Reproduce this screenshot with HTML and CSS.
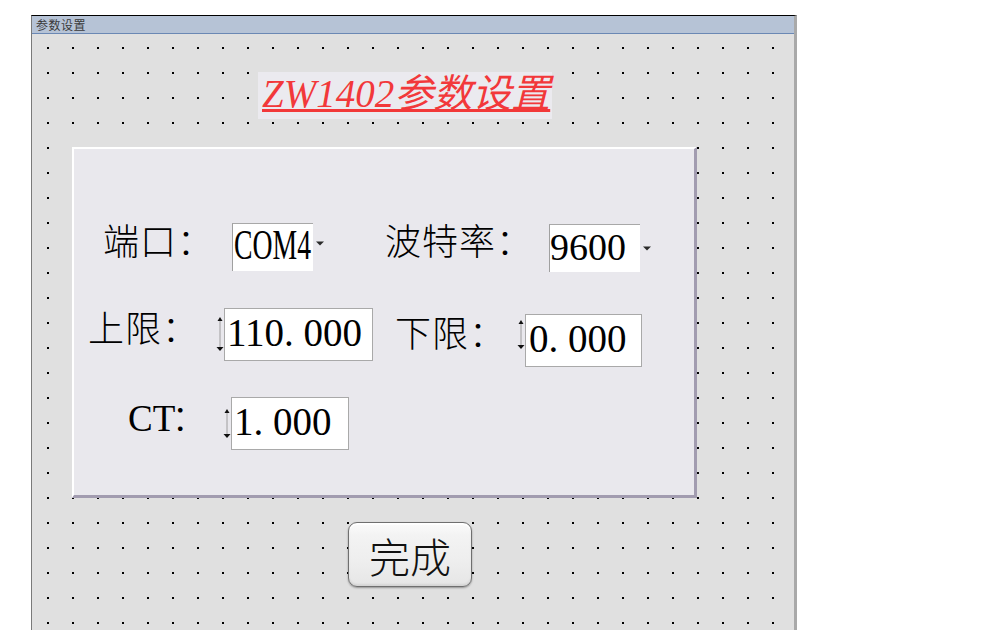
FILE: index.html
```html
<!DOCTYPE html>
<html lang="zh-CN">
<head>
<meta charset="utf-8">
<title>参数设置</title>
<link rel="stylesheet" href="styles.css">
</head>
<body>
<div class="window">
  <div class="titlebar">参数设置</div>
  <div class="canvas">
    <div class="heading"><span class="heading-text">ZW1402参数设置</span></div>
    <div class="panel">
      <div class="row row1">
        <div class="lab lab-port">端口：</div>
        <div class="combo combo-port"><span class="narrow">COM4</span></div>
        <svg class="drop drop-port" width="8" height="5" viewBox="0 0 8 5"><polygon points="0,0.5 8,0.5 4,4.5" fill="#2a2a2a"/></svg>
        <div class="lab lab-baud">波特率：</div>
        <div class="combo combo-baud">9600</div>
        <svg class="drop drop-baud" width="8" height="5" viewBox="0 0 8 5"><polygon points="0,0.5 8,0.5 4,4.5" fill="#2a2a2a"/></svg>
      </div>
      <div class="row row2">
        <div class="lab lab-upper">上限：</div>
        <svg class="spin spin-upper" width="8" height="36" viewBox="0 0 8 36"><polygon points="1.5,5 4,1 6.5,5" fill="#111"/><line x1="4" y1="5" x2="4" y2="31" stroke="#8a8a8a" stroke-width="0.8"/><polygon points="0.5,31 7.5,31 4,35" fill="#111"/></svg>
        <div class="num num-upper">110<span class="pt">.</span>000</div>
        <div class="lab lab-lower">下限：</div>
        <svg class="spin spin-lower" width="8" height="31" viewBox="0 0 8 31"><polygon points="1.5,5 4,1 6.5,5" fill="#111"/><line x1="4" y1="5" x2="4" y2="26" stroke="#8a8a8a" stroke-width="0.8"/><polygon points="0.5,26 7.5,26 4,30" fill="#111"/></svg>
        <div class="num num-lower">0<span class="pt">.</span>000</div>
      </div>
      <div class="row row3">
        <div class="lab lab-ct"><span class="latin">CT</span>：</div>
        <svg class="spin spin-ct" width="8" height="31" viewBox="0 0 8 31"><polygon points="1.5,5 4,1 6.5,5" fill="#111"/><line x1="4" y1="5" x2="4" y2="26" stroke="#8a8a8a" stroke-width="0.8"/><polygon points="0.5,26 7.5,26 4,30" fill="#111"/></svg>
        <div class="num num-ct">1<span class="pt">.</span>000</div>
      </div>
    </div>
    <button class="done" type="button">完成</button>
  </div>
</div>
</body>
</html>
```

FILE: styles.css
```css
html, body {
  margin: 0;
  padding: 0;
  background: #ffffff;
  overflow: hidden;
}

body {
  width: 1008px;
  height: 630px;
}

.window {
  margin: 15px 0 0 31px;
  width: 766px;
  height: 640px;
  box-sizing: border-box;
  border-top: 1px solid #000000;
  border-left: 1px solid #7a7a7a;
  border-right: 3px solid #a9a9a9;
  display: flex;
  flex-direction: column;
}

.titlebar {
  height: 17px;
  background: #b6c3d6;
  border-bottom: 1px solid #6b88b4;
  font-family: "Noto Sans CJK SC", sans-serif;
  font-size: 12px;
  line-height: 18px;
  color: #3a3a3a;
  padding-left: 4px;
  letter-spacing: 0.5px;
  flex: none;
}

.canvas {
  flex: 1;
  background-color: #e0e0e0;
  background-image: radial-gradient(circle at 1px 1px, #000000 0, #000000 0.75px, rgba(0,0,0,0) 1.15px);
  background-size: 25px 25px;
  background-position: 15px 13px;
  display: flex;
  flex-direction: column;
  align-items: flex-start;
}

.heading {
  margin: 38px 0 0 226px;
  width: 294px;
  height: 47px;
  box-sizing: border-box;
  padding-left: 4px;
  background: #ebeaef;
  font-family: "Liberation Serif", "Noto Sans CJK SC", serif;
  font-size: 39px;
  line-height: 44px;
  font-style: italic;
  color: #f2383a;
  white-space: nowrap;
}

.heading-text {
  text-decoration: underline;
  text-decoration-thickness: 3px;
  text-underline-offset: 2px;
  letter-spacing: 0;
}

.panel {
  margin: 28px 0 0 40px;
  width: 625px;
  height: 351px;
  box-sizing: border-box;
  border-style: solid;
  border-width: 2px 3px 3px 2px;
  border-color: #ffffff #a29cb0 #a29cb0 #ffffff;
  background: #e9e8ed;
  padding-top: 74px;
}

.row {
  display: flex;
  align-items: flex-start;
}

.row2 { margin-top: 36px; }
.row3 { margin-top: 30px; }

.lab {
  flex: none;
  font-family: "Noto Sans CJK SC", sans-serif;
  font-weight: 300;
  font-size: 36px;
  line-height: 37px;
  height: 37px;
  letter-spacing: 1px;
  color: #000000;
  white-space: nowrap;
}

.lab-port { margin: -2px 0 0 29px; width: 129px; }
.lab-baud { margin: -2px 0 0 61px; width: 164px; }
.lab-upper { margin: 0 0 0 14px; width: 128px; }
.lab-lower { margin: 5px 0 0 22px; width: 122px; }
.lab-ct { margin: 0 0 0 54px; width: 95px; letter-spacing: 0; }

.latin {
  font-family: "Liberation Serif", serif;
  font-size: 37px;
  font-weight: 400;
  margin-right: -4px;
}

.combo {
  flex: none;
  height: 48px;
  box-sizing: border-box;
  background: #ffffff;
  border-top: 1px solid #a8a8a8;
  border-left: 1px solid #a0a0a0;
  font-family: "Liberation Serif", serif;
  color: #000000;
  overflow: hidden;
  white-space: nowrap;
}

.combo-port {
  width: 81px;
  font-size: 42px;
  line-height: 42px;
  padding-left: 1px;
}

.narrow {
  display: inline-block;
  transform: scaleX(0.66);
  transform-origin: left center;
}

.combo-baud {
  width: 91px;
  margin-top: 1px;
  font-size: 38px;
  line-height: 45px;
  padding-left: 0;
}

.drop {
  flex: none;
  display: block;
}

.drop-port { margin: 18px 0 0 3px; }
.drop-baud { margin: 23px 0 0 3px; }

.spin {
  flex: none;
  display: block;
}

.spin-upper { margin-top: 8px; }
.spin-lower { margin-top: 11px; }
.spin-ct { margin-top: 11px; }

.num {
  flex: none;
  height: 53px;
  box-sizing: border-box;
  background: #ffffff;
  border: 1px solid #a9a9a9;
  font-family: "Liberation Serif", serif;
  font-size: 39px;
  line-height: 47px;
  color: #000000;
  white-space: nowrap;
  overflow: hidden;
  padding-left: 2px;
}

.pt {
  display: inline-block;
  width: 0.5em;
}

.num-upper { width: 149px; }
.num-lower { width: 117px; margin-top: 6px; padding-left: 3px; }
.num-ct { width: 118px; padding-left: 2px; }

.done {
  margin: 24px 0 0 316px;
  width: 124px;
  height: 65px;
  box-sizing: border-box;
  border: 1px solid #6f6f6f;
  border-radius: 9px;
  background: linear-gradient(#fbfbfb 0%, #f3f3f3 20%, #eeeeee 60%, #e6e6e6 100%);
  box-shadow: 0 1px 2px rgba(0,0,0,0.35), inset 0 2px 1px rgba(255,255,255,0.9), inset 0 -2px 2px rgba(0,0,0,0.08);
  font-family: "Noto Sans CJK SC", sans-serif;
  font-weight: 300;
  font-size: 41px;
  line-height: 50px;
  color: #111111;
  padding: 0;
  display: flex;
  align-items: center;
  justify-content: center;
}
```
